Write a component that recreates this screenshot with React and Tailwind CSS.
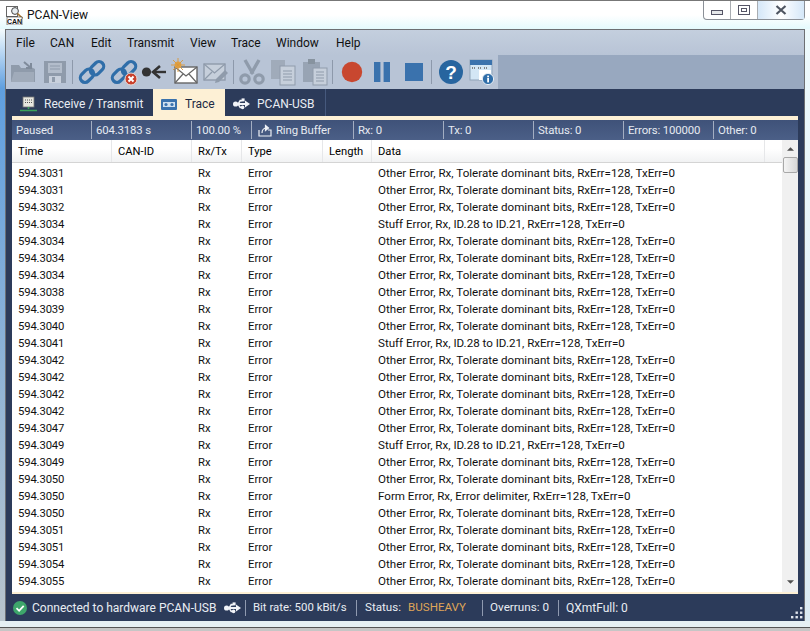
import React from 'react';

const OTHER = 'Other Error, Rx, Tolerate dominant bits, RxErr=128, TxErr=0';
const STUFF = 'Stuff Error, Rx, ID.28 to ID.21, RxErr=128, TxErr=0';
const FORM = 'Form Error, Rx, Error delimiter, RxErr=128, TxErr=0';

const rows = [
  ['3031', OTHER], ['3031', OTHER], ['3032', OTHER], ['3034', STUFF], ['3034', OTHER],
  ['3034', OTHER], ['3034', OTHER], ['3038', OTHER], ['3039', OTHER], ['3040', OTHER],
  ['3041', STUFF], ['3042', OTHER], ['3042', OTHER], ['3042', OTHER], ['3042', OTHER],
  ['3047', OTHER], ['3049', STUFF], ['3049', OTHER], ['3050', OTHER], ['3050', FORM],
  ['3050', OTHER], ['3051', OTHER], ['3051', OTHER], ['3054', OTHER], ['3055', OTHER],
];

const COLS = 'grid grid-cols-[100px_80px_50px_81px_49px_393px_17px]';

const Icon = ({ className = '', children }) => (
  <svg viewBox="0 0 28 28" className={`w-[28px] h-[28px] shrink-0 ${className}`}>{children}</svg>
);

const Chain = () => (
  <g fill="none" stroke="#2f6ea9" strokeWidth="3.2">
    <rect x="1.5" y="13" width="15" height="9.4" rx="4.7" transform="rotate(-45 9 17.7)" />
    <rect x="11.5" y="5.6" width="15" height="9.4" rx="4.7" transform="rotate(-45 19 10.3)" />
  </g>
);

const UsbIcon = ({ className = '' }) => (
  <svg viewBox="0 0 17 12" className={`w-[17px] h-[12px] shrink-0 ${className}`} fill="#f2f4f8">
    <circle cx="2.6" cy="6" r="2.6" />
    <rect x="2" y="5" width="11" height="2" />
    <path d="M12 2.6l5 3.4-5 3.4z" />
    <path d="M4.2 6l2.6-4.2h2.4v1.6H7.7L5.8 6z" />
    <rect x="8.6" y="0.4" width="3" height="3" />
    <path d="M4.2 6l2.6 4.2h1.6V8.6h-.8L5.8 6z" />
    <circle cx="9.6" cy="9.4" r="1.8" />
  </svg>
);

const Sep = () => <div className="w-px h-[24px] bg-[#8d99ab] shrink-0" />;

function Toolbar() {
  return (
    <div className="h-[34px] bg-[#98a8bf] flex">
      <div className="w-[492px] bg-[#b8c4d6] flex items-center">
        <Icon className="ml-[3px]">
          <path d="M2 7h8l2 3h6l4-1 4 2v13H2z" fill="#8f9bab" />
          <path d="M2 24l3-10h20v10z" fill="#a0abba" />
          <path d="M15 4l7 6M22 5v5h-5" fill="none" stroke="#7f8b9b" strokeWidth="2" />
        </Icon>
        <Icon className="ml-[4px]">
          <path d="M3 3h22v22H3z" fill="#8f9bab" />
          <rect x="7" y="5" width="14" height="10" fill="#b3bdcb" />
          <path d="M9 8h10M9 11h10" stroke="#8f9bab" />
          <rect x="8" y="18" width="12" height="7" fill="#c8d0dc" />
          <rect x="11" y="19" width="3" height="5" fill="#8f9bab" />
        </Icon>
        <div className="ml-[3px]"><Sep /></div>
        <Icon className="ml-[5px]"><Chain /></Icon>
        <Icon className="ml-[4px]">
          <Chain />
          <circle cx="21" cy="21" r="6" fill="#c8402c" stroke="#e9dcd8" />
          <path d="M18.5 18.5l5 5M23.5 18.5l-5 5" stroke="#fff" strokeWidth="2" />
        </Icon>
        <Icon className="ml-[2px]">
          <circle cx="6.5" cy="14" r="4.6" fill="#333" />
          <path d="M13 14h13" stroke="#333" strokeWidth="2.4" />
          <path d="M20 8l-7 6 7 6" fill="none" stroke="#333" strokeWidth="2.6" />
        </Icon>
        <Icon className="ml-[3px]">
          <rect x="4" y="9" width="22" height="16" fill="#fff" stroke="#666" strokeWidth="1.4" />
          <path d="M4 9l11 9 11-9M4 25l8-9M26 25l-8-9" fill="none" stroke="#666" strokeWidth="1.2" />
          <circle cx="7" cy="7" r="3.4" fill="#e3a245" />
          <path d="M7 0v14M0 7h14M2 2l10 10M12 2L2 12" stroke="#d9983a" strokeWidth="0.9" />
        </Icon>
        <Icon className="ml-[2px]">
          <rect x="3" y="6" width="21" height="16" fill="#c6cfdb" stroke="#8f9bab" strokeWidth="1.4" />
          <path d="M3 6l10.5 9L24 6M3 22l8-8" fill="none" stroke="#8f9bab" strokeWidth="1.2" />
          <path d="M14 25l1-4 9-9 3 3-9 9z" fill="#8f9bab" />
        </Icon>
        <div className="ml-[4px]"><Sep /></div>
        <Icon className="ml-[4px]">
          <path d="M7 2l8 14M21 2l-8 14" stroke="#8f9bab" strokeWidth="3.4" />
          <circle cx="7" cy="21" r="4.2" fill="none" stroke="#8f9bab" strokeWidth="3.2" />
          <circle cx="21" cy="21" r="4.2" fill="none" stroke="#8f9bab" strokeWidth="3.2" />
        </Icon>
        <Icon className="ml-[3px]">
          <rect x="2" y="2" width="14" height="19" fill="#a0abba" />
          <rect x="11" y="8" width="15" height="19" fill="#c6cfdb" stroke="#8f9bab" />
          <path d="M14 13h9M14 16h9M14 19h9M14 22h9" stroke="#8f9bab" />
        </Icon>
        <Icon className="ml-[4px]">
          <rect x="2" y="4" width="17" height="20" fill="#98a4b4" />
          <rect x="7" y="1" width="7" height="5" fill="#87939f" />
          <rect x="12" y="10" width="14" height="17" fill="#c6cfdb" stroke="#8f9bab" />
          <path d="M15 14h8M15 17h8M15 20h8M15 23h8" stroke="#8f9bab" />
        </Icon>
        <div className="ml-[3px]"><Sep /></div>
        <Icon className="ml-[5px]"><circle cx="14" cy="14" r="10.2" fill="#c8472f" /></Icon>
        <Icon className="ml-[2px]">
          <rect x="6" y="4" width="6.4" height="20" fill="#3a72ad" />
          <rect x="15.6" y="4" width="6.4" height="20" fill="#3a72ad" />
        </Icon>
        <Icon className="ml-[4px]"><rect x="5" y="5" width="18" height="18" fill="#3a72ad" /></Icon>
        <div className="ml-[3px]"><Sep /></div>
        <Icon className="ml-[5px]">
          <circle cx="14" cy="14" r="12" fill="#27659f" />
          <text x="14" y="20.5" textAnchor="middle" fontSize="19" fontWeight="700" fill="#fff" fontFamily="'Liberation Sans', sans-serif">?</text>
        </Icon>
        <Icon className="ml-[2px]">
          <rect x="3" y="2" width="22" height="20" fill="#d3e6f5" stroke="#8fa3b8" />
          <rect x="3" y="2" width="22" height="5" fill="#3a72ad" />
          <path d="M5 10h4M11 10h4M17 10h4" stroke="#666" strokeWidth="1.4" strokeDasharray="1 1" />
          <rect x="12" y="12" width="12" height="10" fill="#fff" />
          <circle cx="21" cy="21" r="5.6" fill="#2f6ea9" stroke="#e4ecf4" />
          <rect x="20.2" y="20" width="1.8" height="4.4" fill="#fff" />
          <rect x="20.2" y="17.6" width="1.8" height="1.7" fill="#fff" />
        </Icon>
      </div>
    </div>
  );
}

function Tabs() {
  return (
    <div className="h-[27px] flex bg-[#2c3b5a] text-[#e9edf3]">
      <div className="w-[147px] pl-[14px] pt-[2px] flex items-center gap-[7px]">
        <svg viewBox="0 0 17 16" className="w-[17px] h-[16px] shrink-0">
          <rect x="3" y="1" width="11" height="10" fill="#e8e8e0" stroke="#777" strokeWidth="0.8" />
          <path d="M5 4h7M5 6.5h7" stroke="#555" strokeDasharray="1 1" />
          <path d="M8.5 11v2M0 14.5h17" stroke="#3aa35a" strokeWidth="1.6" />
        </svg>
        <span>Receive / Transmit</span>
      </div>
      <div className="w-[72px] h-[28px] pl-[8px] pt-[2px] flex items-center gap-[8px] bg-[#fdf0d5] text-[#1c2a44]">
        <svg viewBox="0 0 16 11" className="w-[16px] h-[11px] shrink-0">
          <rect width="16" height="11" rx="1" fill="#3a72ad" />
          <rect x="2" y="3" width="12" height="5" fill="#cfe0ef" />
          <circle cx="5" cy="5.5" r="1.6" fill="#3a72ad" />
          <circle cx="11" cy="5.5" r="1.6" fill="#3a72ad" />
        </svg>
        <span>Trace</span>
      </div>
      <div className="w-[101px] pl-[8px] pt-[2px] flex items-center gap-[7px] border-r border-[#46597d]">
        <UsbIcon />
        <span>PCAN-USB</span>
      </div>
    </div>
  );
}

const stats = [
  ['w-[80px]', 'Paused'],
  ['w-[100px]', '604.3183 s'],
  ['w-[60px]', '100.00 %'],
  ['w-[102px]', 'ring'],
  ['w-[90px]', 'Rx: 0'],
  ['w-[90px]', 'Tx: 0'],
  ['w-[90px]', 'Status: 0'],
  ['w-[90px]', 'Errors: 100000'],
];

function StatsBar() {
  return (
    <div className="h-[20px] flex items-center bg-gradient-to-b from-[#3f5279] to-[#4b5f87] text-[#e6eaf1] text-[11.4px] tracking-[-0.15px]">
      {stats.map(([w, label]) => (
        <div key={label} className={`${w} h-[18px] pl-[4px] pt-px flex items-center border-r border-[#a3aec2] whitespace-nowrap`}>
          {label === 'ring' ? (
            <>
              <svg viewBox="0 0 14 13" className="w-[14px] h-[13px] ml-[2px] mr-[4px] shrink-0" fill="none" stroke="#eef1f6" strokeWidth="1.2">
                <path d="M1 6v6h12V6h-3" />
                <path d="M4 9c0-4 2-5 5-5" />
                <path d="M7.5 1.5L10.5 4 7.5 6.5z" fill="#eef1f6" />
              </svg>
              Ring Buffer
            </>
          ) : label}
        </div>
      ))}
      <div className="pl-[4px] pt-px whitespace-nowrap">Other: 0</div>
    </div>
  );
}

function LogTable() {
  const head = ['Time', 'CAN-ID', 'Rx/Tx', 'Type', 'Length', 'Data', ''];
  return (
    <div className="h-[452px] flex bg-white overflow-hidden">
      <div className="w-[770px] shrink-0">
        <div className={`${COLS} h-[23px] mb-[2px] border-b border-[#d4d4d4] text-[11.2px] bg-gradient-to-b from-white from-40% to-[#f1f2f3]`}>
          {head.map((h, i) => (
            <div key={i} className={`pl-[6px] pt-[2px] flex items-center ${i < 6 ? 'border-r border-[#e6e7e9]' : ''}`}>{h}</div>
          ))}
        </div>
        {rows.map(([t, data], i) => (
          <div key={i} className={`${COLS} h-[17px] items-center whitespace-nowrap text-[#111] text-[11.3px]`}>
            <div className="pl-[6px] tracking-[-0.15px]">594.{t}</div>
            <div />
            <div className="pl-[6px]">Rx</div>
            <div className="pl-[6px]">Error</div>
            <div />
            <div className="pl-[6px] text-[11.6px]">{data}</div>
          </div>
        ))}
      </div>
      <div className="w-[16px] bg-[#f0f0f0] flex flex-col items-center">
        <svg viewBox="0 0 8 4" className="w-[7px] h-[4px] mt-[7px] fill-[#505050]"><path d="M4 0l4 4H0z" /></svg>
        <div className="w-[15px] h-[16px] mt-[6px] rounded-[2px] border border-[#a8a8a8] bg-gradient-to-r from-[#f4f4f4] to-[#d8d8d8]" />
        <svg viewBox="0 0 8 4" className="w-[7px] h-[4px] mt-auto mb-[8px] fill-[#505050]"><path d="M0 0h8L4 4z" /></svg>
      </div>
    </div>
  );
}

const BarSep = () => <div className="w-px h-[16px] bg-[#8f9ab0] shrink-0" />;

function StatusBar() {
  return (
    <div className="h-[27px] flex items-center pl-[7px] pt-px bg-[#2c3b5a] text-[#e9edf3] whitespace-nowrap">
      <svg viewBox="0 0 14 14" className="w-[14px] h-[14px] shrink-0">
        <circle cx="7" cy="7" r="7" fill="#3ea66b" />
        <path d="M3.5 7.2l2.6 2.6 4.6-5" fill="none" stroke="#fff" strokeWidth="1.8" />
      </svg>
      <span className="ml-[5px] w-[185px]">Connected to hardware PCAN-USB</span>
      <UsbIcon className="ml-[7px]" />
      <div className="ml-[4px]"><BarSep /></div>
      <span className="ml-[7px] w-[95px] text-[11.4px]">Bit rate: 500 kBit/s</span>
      <div className="ml-[8px]"><BarSep /></div>
      <span className="ml-[8px] w-[43px] text-[11.6px]">Status:</span>
      <span className="w-[66px] text-[11.6px] text-[#dfa558]">BUSHEAVY</span>
      <div className="ml-[8px]"><BarSep /></div>
      <span className="ml-[7px] w-[60px] text-[11.7px]">Overruns: 0</span>
      <div className="ml-[8px]"><BarSep /></div>
      <span className="ml-[7px]">QXmtFull: 0</span>
      <svg viewBox="0 0 12 12" className="w-[12px] h-[12px] ml-auto mr-[1px] mt-[10px] fill-[#dfe4ec]">
        <rect x="9" y="0" width="2.4" height="2.4" />
        <rect x="4.5" y="4.5" width="2.4" height="2.4" />
        <rect x="9" y="4.5" width="2.4" height="2.4" />
        <rect x="0" y="9" width="2.4" height="2.4" />
        <rect x="4.5" y="9" width="2.4" height="2.4" />
        <rect x="9" y="9" width="2.4" height="2.4" />
      </svg>
    </div>
  );
}

const menu = [
  ['File', 'w-[34px]'], ['CAN', 'w-[41px]'], ['Edit', 'w-[36px]'], ['Transmit', 'w-[63px]'],
  ['View', 'w-[41px]'], ['Trace', 'w-[45px]'], ['Window', 'w-[60px]'], ['Help', 'w-[40px]'],
];

export default function App() {
  return (
    <div className="w-[810px] h-[631px] flex flex-col overflow-hidden bg-[#e8f6fa] text-[12px] leading-none text-black font-['Roboto','Open_Sans',sans-serif]">
      {/* title bar */}
      <div className="h-[29px] shrink-0 flex items-start border-t border-[#777] bg-gradient-to-b from-white from-50% to-[#e4fafd]">
        <svg viewBox="0 0 17 19" className="w-[17px] h-[19px] ml-[6px] mt-[5px] shrink-0">
          <rect x="0.5" y="0.5" width="11" height="10" fill="#fff" stroke="#666" />
          <circle cx="9" cy="5" r="3.4" fill="#e8eef2" stroke="#444" />
          <path d="M11.5 7.5l5 5" stroke="#a8752e" strokeWidth="1.6" />
          <rect x="1" y="11" width="15" height="8" fill="#fff" stroke="#444" strokeWidth="0.6" />
          <text x="8.5" y="17.6" textAnchor="middle" fontSize="7" fontWeight="700" fill="#111" fontFamily="'Liberation Sans', sans-serif">CAN</text>
        </svg>
        <span className="ml-[4px] mt-[8px] text-[12px] text-[#111]">PCAN-View</span>
        {/* caption buttons */}
        <div className="ml-auto mr-[5px] w-[102px] h-[19px] flex rounded-b-[4px] border border-t-0 border-[#8b9097] bg-white">
          <div className="w-[27px] flex items-center justify-center border-r border-[#a9adb2]">
            <div className="w-[12px] h-[5px] mt-[4px] border border-[#556] bg-[#e6e8ea]" />
          </div>
          <div className="w-[27px] flex items-center justify-center border-r border-[#a9adb2]">
            <div className="w-[12px] h-[10px] border border-[#556] flex items-center justify-center"><div className="w-[6px] h-[4px] border border-[#556]" /></div>
          </div>
          <div className="flex-1 flex items-center justify-center bg-gradient-to-r from-[#d5e7f8] via-white to-[#d5e7f8]">
            <svg viewBox="0 0 12 10" className="w-[12px] h-[10px]"><path d="M1.5 1l9 8M10.5 1l-9 8" stroke="#4e5561" strokeWidth="2.2" /></svg>
          </div>
        </div>
      </div>

      <div className="flex h-[592px] shrink-0">
        {/* left frame */}
        <div className="w-[5px] shrink-0 bg-gradient-to-b from-[#f4fbfd] via-[#5f9fdf] via-10% to-[#b8c4cc]" />
        {/* client area */}
        <div className="w-[800px] shrink-0 flex flex-col border-x border-t border-[#6d6f73]">
          <div className="h-[25px] shrink-0 flex items-center pl-[10px] bg-gradient-to-b from-[#c4cfde] to-[#b8c4d6] text-[#111]">
            {menu.map(([m, w]) => <span key={m} className={w}>{m}</span>)}
          </div>
          <Toolbar />
          <Tabs />
          <div className="flex-1 flex flex-col bg-[#2c3b5a] px-[6px] relative">
            <div className="h-[4px] shrink-0 bg-[#fdf0d5]" />
            <StatsBar />
            <LogTable />
            <div className="h-[2px] shrink-0 bg-[#fdf0d5]" />
          </div>
          <StatusBar />
        </div>
        <div className="flex-1 bg-gradient-to-b from-[#eefafd] to-[#dcebf3]" />
      </div>

      {/* window bottom edge */}
      <div className="flex-1 flex flex-col">
        <div className="h-[6px] shrink-0 bg-[#e6f0f4]" />
        <div className="h-px shrink-0 bg-[#555]" />
        <div className="flex-1 bg-[#c6c6c6]" />
      </div>
    </div>
  );
}
